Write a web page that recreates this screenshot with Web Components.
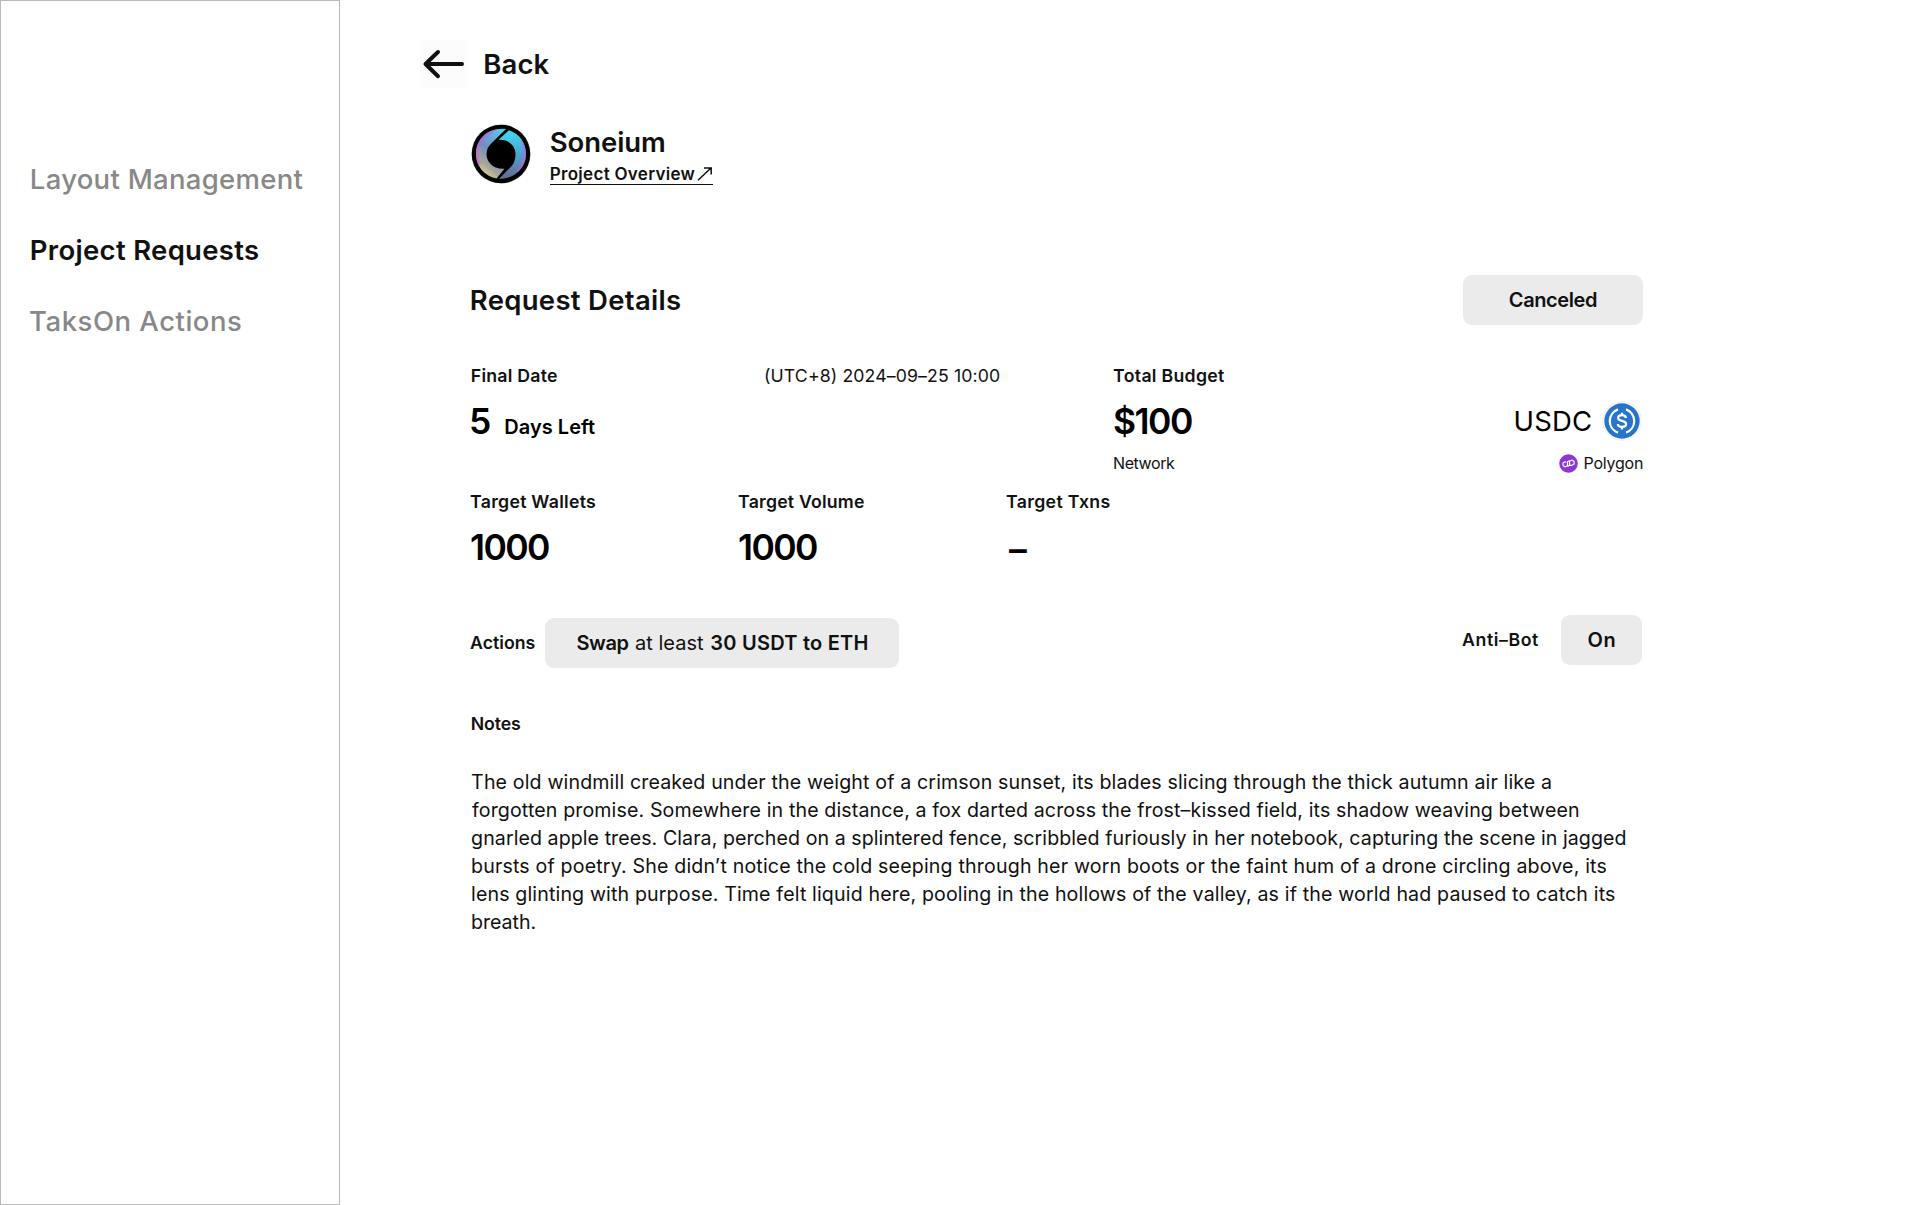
<!DOCTYPE html>
<html lang="en">
<head>
<meta charset="utf-8">
<title>Project Requests</title>
<style>
body{margin:0;background:#fff;font-family:Inter,"Liberation Sans",sans-serif;font-optical-sizing:none;color:#111}
</style>
</head>
<body>
<request-page></request-page>
<script>
const define=(name,html,hook)=>customElements.define(name,class extends HTMLElement{
  constructor(){super();this.attachShadow({mode:'open'}).innerHTML=html;}
  connectedCallback(){if(hook)hook.call(this);}
});

/* One line of text. size, weight, line (line height), w (width of the drawn glyphs), color. */
const pen=document.createElement('canvas').getContext('2d');
define('text-line','<style>:host{display:block;white-space:pre;flex:none}</style><slot></slot>',function(){
  const a=n=>this.getAttribute(n), size=+a('size'), weight=a('weight')||400, text=this.textContent;
  this.style.fontSize=size+'px';this.style.fontWeight=weight;
  this.style.lineHeight=(a('line')||Math.round(size*1.4))+'px';
  if(a('color'))this.style.color=a('color');
  if(a('w')){
    pen.font=`${weight} ${size}px Inter, "Liberation Sans", sans-serif`;
    const m=pen.measureText(text), w=+a('w');
    const ink=m.actualBoundingBoxLeft+m.actualBoundingBoxRight;
    const hang=/^[TAg]/.test(text)?-.9:(weight>=500&&/^[LPBSRCFDN53]/.test(text)&&size<35&&text!=='Swap'?.8:0);
    this.style.width=w+'px';
    this.style.textIndent=(m.actualBoundingBoxLeft+hang)+'px';
    if(text.length>1)this.style.letterSpacing=((w-ink-hang)/(text.length-1))+'px';
  }
});

define('side-nav',`<style>
:host{display:flex;flex-direction:column;box-sizing:border-box;width:340px;height:1205px;border:1px solid #b9b9b9;padding:158px 0 0 30px;gap:31px;flex:none}
</style>
<text-line size="27.5" weight="500" line="40" w="271.5" color="#888">Layout Management</text-line>
<text-line size="27.5" weight="570" line="40" w="227">Project Requests</text-line>
<text-line size="27.5" weight="500" line="40" w="210" color="#888">TaksOn Actions</text-line>`);

define('back-link',`<style>
:host{display:flex;align-items:center;gap:16.5px;height:48px}
span{display:block;width:48px;height:48px;background:#fcfcfc}svg{display:block}
</style>
<span><svg width="48" height="48" viewBox="0 0 48 48" fill="none" stroke="#111" stroke-width="4" stroke-linecap="round" stroke-linejoin="round"><path d="M42 24H5.500M18 12L5.500 24L18 36.200"/></svg></span>
<text-line size="27.5" weight="570" line="48" w="65">Back</text-line>`);

define('project-head',`<style>
:host{display:flex;gap:19px}
div{display:flex;flex-direction:column;padding-top:2px}
.link{display:flex;align-items:flex-start;width:163px;height:23px;margin-top:4px;box-sizing:border-box;border-bottom:1.5px solid #111}
.link text-line{padding-top:1px}
svg{display:block}.link svg{margin:5px 0 0 2px}
</style>
<svg width="60" height="60" viewBox="-0.500 -0.500 60 60">
<defs>
<linearGradient id="l" x1=".75" y1="0" x2=".25" y2="1"><stop offset="0" stop-color="#58c8ee"/><stop offset=".45" stop-color="#6f91bf"/><stop offset=".75" stop-color="#a8a79c"/><stop offset="1" stop-color="#e4e28a"/></linearGradient>
<linearGradient id="r" x1=".4" y1="0" x2=".4" y2="1"><stop offset="0" stop-color="#41dcf0"/><stop offset=".5" stop-color="#4aa5cf"/><stop offset="1" stop-color="#66688f"/></linearGradient>
<radialGradient id="v" gradientUnits="userSpaceOnUse" cx="30" cy="30" r="26"><stop offset=".8" stop-color="#c65ad6" stop-opacity="0"/><stop offset="1" stop-color="#d45ae0"/></radialGradient>
</defs>
<circle cx="29.500" cy="29.500" r="29.900" fill="#e9e9e9"/><circle cx="29.500" cy="29.500" r="29.300"/>
<g transform="translate(-.5 -.5)"><path d="M35 5.100C17 3 5 15 5 30C5 42 13 52 25.500 54.600L33.500 44.800C22 45.500 15.500 38 15.500 30C15.500 25.500 17.500 22 21 18.800Z" fill="url(#l)"/>
<path d="M38 6.200C49 10 55 19 55 30C55 44 43 55.500 28 54.800L40.500 42.200C43.300 39 44.500 35 44.500 30C44.500 21.500 37 15 27.500 15.800Z" fill="url(#r)"/>
<path d="M26 5.300C13 7.500 5 18 5 30C5 35 6 38 8 42L13 38L11 27L19 12Z" fill="url(#v)"/>
<path d="M50 15C53.500 20 55 25 55 30C55 37 52 43 47 48L44 44L51 30Z" fill="url(#v)"/></g>
</svg>
<div><text-line size="27.5" weight="570" line="32" w="114">Soneium</text-line>
<span class="link"><text-line size="17" weight="570" line="23" w="144.500">Project Overview</text-line><svg width="16" height="14" viewBox="0 0 16 14" fill="none" stroke="#111" stroke-width="1.5"><path d="M1 13.300L14 1M7 .9H14.200V7.500"/></svg></span></div>`);

define('grey-chip',`<style>
:host{display:flex;align-items:center;justify-content:center;height:50px;border-radius:9px;background:#ebebeb;flex:none;gap:6.500px}
</style><slot></slot>`);

define('usdc-icon',`<style>:host{display:block;flex:none}svg{display:block}</style>
<svg width="40" height="40" viewBox="0 0 40 40"><circle cx="20" cy="20" r="19.300" fill="#fff" stroke="#eee" stroke-width="1"/><circle cx="20" cy="20" r="17.700" fill="#2775ca"/>
<g fill="none" stroke="#fff" stroke-width="2.200"><path d="M16 8.400A12.300 12.300 0 0 0 16 31.600M24 8.400A12.300 12.300 0 0 1 24 31.600"/>
<path d="M24 17C23.700 15 22.300 14.200 20 14.200C17.700 14.200 16.100 15.200 16.100 17C16.100 18.800 17.500 19.300 20 19.900C22.700 20.500 24.100 21.200 24.100 23.100C24.100 24.900 22.400 25.900 20 25.900C17.600 25.900 16 24.900 15.800 23M20 11.800V14.500M20 25.500V28.400"/></g></svg>`);

define('polygon-icon',`<style>:host{display:block;flex:none}svg{display:block}</style>
<svg width="19" height="19" viewBox="0 0 19 19"><circle cx="9.500" cy="9.500" r="9.300" fill="#8a36d8"/><path d="M7.300 8.300L6.100 7.800L4 9V11.600L6.200 12.900L8.500 11.600V7.700L10.700 6.400M10.500 11.200L12.800 11.300L15.100 10V7.400L12.900 6.100L10.600 7.400V11.300L8.500 12.500" fill="none" stroke="#fff" stroke-width="1.200" stroke-linejoin="round"/></svg>`);

define('stat-block',`<style>
:host{display:flex;flex-direction:column;gap:11px}
</style><slot></slot>`);

define('request-details',`<style>
:host{display:flex;flex-direction:column;width:1172px}
.row{display:flex;align-items:flex-start}
.between{justify-content:space-between}
.base{display:flex;align-items:baseline;gap:13.500px}
.top{height:50px;align-items:center}
.info{margin-top:38px;height:126px}
.date,.budget{width:529px}
.budget{margin-left:114px}
.money{height:44px;align-items:center;margin-top:10px}
.money>text-line{padding-top:2px}
.coin,.net{display:flex;align-items:center}
.targets{height:126px}
.cell{width:268px}
.big{color:#000}
.actions{height:53px}
.act,.bot{display:flex;align-items:center}
.act{padding-top:3px;gap:10.500px}
.bot{gap:23px;margin-right:1px}
</style>
<div class="row top between"><text-line size="27.5" weight="570" line="40" w="209">Request Details</text-line>
<grey-chip style="width:180px"><text-line size="20" weight="570" line="28" w="88">Canceled</text-line></grey-chip></div>
<div class="row info">
 <div class="date"><div class="row between"><text-line size="17.7" weight="570" line="26" w="86">Final Date</text-line><text-line size="17.7" line="26" w="235">(UTC+8) 2024–09–25 10:00</text-line></div>
 <div class="base big" style="margin-top:11px"><text-line size="35.5" weight="600" line="44" w="20">5</text-line><text-line size="20" weight="570" line="26" w="90.500">Days Left</text-line></div></div>
 <div class="budget"><text-line size="17.7" weight="570" line="26" w="110">Total Budget</text-line>
 <div class="row between money big"><text-line size="35.5" weight="600" line="44" w="78">$100</text-line><span class="coin" style="gap:11px;margin-right:1px"><text-line size="27.5" line="44" w="75.500">USDC</text-line><usdc-icon></usdc-icon></span></div>
 <div class="row between" style="margin-top:7px"><text-line size="16" line="26" w="61">Network</text-line><span class="net" style="gap:7px"><polygon-icon></polygon-icon><text-line size="16" line="26" w="58.500">Polygon</text-line></span></div></div>
</div>
<div class="row targets">
 <stat-block class="cell"><text-line size="17.7" weight="570" line="26" w="124">Target Wallets</text-line><text-line class="big" size="35.5" weight="600" line="44" w="78">1000</text-line></stat-block>
 <stat-block class="cell"><text-line size="17.7" weight="570" line="26" w="125">Target Volume</text-line><text-line class="big" size="35.5" weight="600" line="44" w="78">1000</text-line></stat-block>
 <stat-block class="cell"><text-line size="17.7" weight="570" line="26" w="102.500">Target Txns</text-line><text-line class="big" size="35.5" weight="600" line="48" w="19" style="padding-left:2px">–</text-line></stat-block>
</div>
<div class="row actions between">
 <div class="act"><text-line size="17.7" weight="570" line="26" w="63.500">Actions</text-line><grey-chip style="width:354px"><text-line size="20" weight="570" line="28" w="52">Swap</text-line><text-line size="20" line="28" w="69">at least</text-line><text-line size="20" weight="570" line="28" w="157">30 USDT to ETH</text-line></grey-chip></div>
 <div class="bot"><text-line size="17.7" weight="570" line="26" w="75">Anti–Bot</text-line><grey-chip style="width:81px"><text-line size="20" weight="570" line="28" w="26">On</text-line></grey-chip></div>
</div>
<text-line style="margin-top:43px" size="17.7" weight="570" line="26" w="49">Notes</text-line>
<slot></slot>`);

define('notes-text',`<style>:host{display:block;padding:31px 0 0 1px}</style>
<text-line size="19.6" line="28" w="1079">The old windmill creaked under the weight of a crimson sunset, its blades slicing through the thick autumn air like a</text-line>
<text-line size="19.6" line="28" w="1107">forgotten promise. Somewhere in the distance, a fox darted across the frost–kissed field, its shadow weaving between</text-line>
<text-line size="19.6" line="28" w="1153.500">gnarled apple trees. Clara, perched on a splintered fence, scribbled furiously in her notebook, capturing the scene in jagged</text-line>
<text-line size="19.6" line="28" w="1134.500">bursts of poetry. She didn’t notice the cold seeping through her worn boots or the faint hum of a drone circling above, its</text-line>
<text-line size="19.6" line="28" w="1143">lens glinting with purpose. Time felt liquid here, pooling in the hollows of the valley, as if the world had paused to catch its</text-line>
<text-line size="19.6" line="28" w="63.500">breath.</text-line>`);

define('request-page',`<style>
:host{display:flex;height:1205px;overflow:hidden}
main{flex:1;padding:40px 0 0 80px}
.body{padding:36px 0 0 51px}
request-details{margin-top:90px}
</style>
<side-nav></side-nav>
<main><back-link></back-link><div class="body"><project-head></project-head><request-details><notes-text></notes-text></request-details></div></main>`);
</script>
</body>
</html>
